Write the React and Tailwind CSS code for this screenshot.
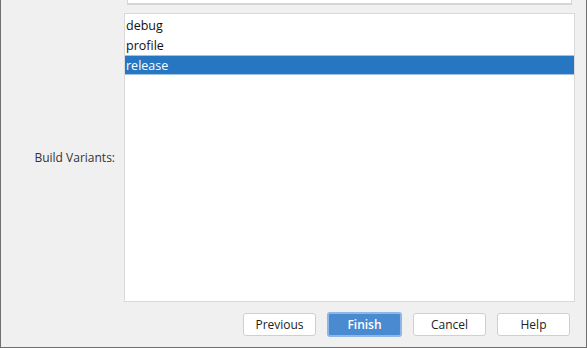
export default function App() {
  const variants = ['debug', 'profile', 'release'];
  const selected = 'release';

  return (
    <div
      className="w-[587px] h-[348px] bg-[#f0f0f0] border-l border-r border-b border-[#707070] flex flex-col overflow-hidden"
      style={{ fontFamily: '"Open Sans", "Noto Sans", sans-serif' }}
    >
      {/* bottom edge of the field above, scrolled off */}
      <div className="ml-[126px] w-[445px] h-[5px] bg-white border-l border-r border-b-2 border-[#d6d6d6] shrink-0" />

      <div className="flex mt-[8px]">
        <div className="w-[123px] flex items-center justify-end pr-[9px] text-[12px] text-[#333]">
          Build Variants:
        </div>
        <div className="w-[451px] h-[289px] bg-white border border-[#d9d9d9] pt-[1px]">
          {variants.map((v) => (
            <div
              key={v}
              className={`h-[20px] flex items-center pl-[1px] pt-[3px] text-[12.5px] leading-none ${
                v === selected ? 'bg-[#2676c2] text-white border-t border-b border-[#9ec3e6]' : 'text-[#111]'
              }`}
            >
              {v}
            </div>
          ))}
        </div>
      </div>

      <div className="flex justify-end gap-[11px] pr-[16px] mt-[11px]">
        <button className="w-[73px] h-[23px] bg-white border border-[#cfcfcf] rounded-[3px] text-[12px] text-[#222]">Previous</button>
        <button className="w-[75px] h-[25px] -my-[1px] bg-[#4a8ad0] border-2 border-[#8fb7e6] rounded-[3px] text-[12px] font-semibold text-white">Finish</button>
        <button className="w-[73px] h-[23px] bg-white border border-[#cfcfcf] rounded-[3px] text-[12px] text-[#222]">Cancel</button>
        <button className="w-[73px] h-[23px] bg-white border border-[#cfcfcf] rounded-[3px] text-[12px] text-[#222]">Help</button>
      </div>
    </div>
  );
}
